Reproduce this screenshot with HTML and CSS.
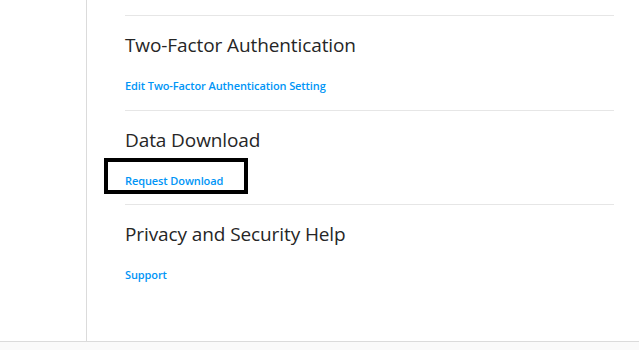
FILE: index.html
```html
<!DOCTYPE html>
<html>
	<head>
		<meta charset="UTF-8">
		<title>Privacy and Security</title>
		<link rel="stylesheet" href="styles.css">
	</head>
	<body>
		<div class="page">
			<div class="side"></div>
			<div class="main">
				<div class="section">
					<h2 class="title">Two-Factor Authentication</h2>
					<a href="javascript:;" class="link">Edit Two-Factor Authentication Setting</a>
				</div>
				<div class="section">
					<h2 class="title">Data Download</h2>
					<div class="marked">
						<a href="javascript:;" class="link">Request Download</a>
						<div class="mark"></div>
					</div>
				</div>
				<div class="section">
					<h2 class="title">Privacy and Security Help</h2>
					<a href="javascript:;" class="link">Support</a>
				</div>
			</div>
		</div>
		<div class="foot"></div>
	</body>
</html>
```

FILE: styles.css
```css
*{
	padding: 0;
	margin: 0;
	box-sizing: border-box;
}
body{
	background: #fff;
	font-family: "Open Sans", "Noto Sans", sans-serif;
	overflow: hidden;
}
.page{
	display: flex;
	height: 341px;
}
.side{
	width: 87px;
	border-right: 1px solid #dbdbdb;
}
.main{
	width: 527px;
	padding-top: 15px;
	padding-left: 38px;
}
.section{
	border-top: 1px solid #e6e6e6;
	padding: 17px 0 15px;
}
.section:nth-child(2){
	padding-bottom: 14px;
}
.title{
	font-size: 19px;
	font-weight: 400;
	line-height: 24px;
	color: #262626;
	letter-spacing: -0.1px;
}
.link{
	display: block;
	width: fit-content;
	margin-top: 20px;
	font-size: 11px;
	font-weight: 600;
	line-height: 18px;
	color: #0095f6;
	text-decoration: none;
	letter-spacing: -0.1px;
}
.marked{
	position: relative;
}
.mark{
	position: absolute;
	left: -21px;
	top: -14px;
	width: 144px;
	height: 36px;
	border: 4px solid #000;
}
.foot{
	height: 9px;
	background: #fafafa;
	border-top: 1px solid #dbdbdb;
}
```
